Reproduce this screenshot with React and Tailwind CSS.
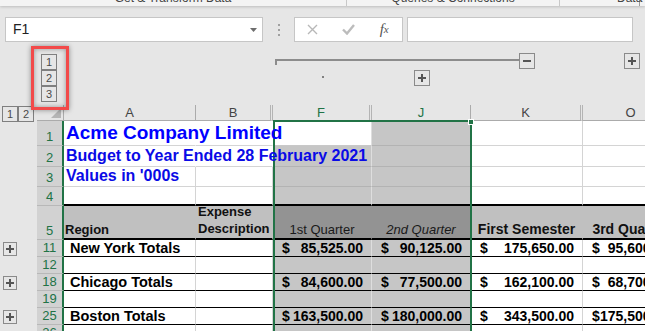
import React from "react";

const SANS = "[font-family:'Liberation_Sans',Arial,sans-serif]";

const totals = [
  { n: "11", label: "New York Totals", q1: "85,525.00", q2: "90,125.00", h1: "175,650.00", q3: "95,600.00" },
  { n: "12" },
  { n: "18", label: "Chicago Totals", q1: "84,600.00", q2: "77,500.00", h1: "162,100.00", q3: "68,700.00" },
  { n: "19" },
  { n: "25", label: "Boston Totals", q1: "163,500.00", q2: "180,000.00", h1: "343,500.00", q3: "175,500.00" },
];

function PlusIcon() {
  return (
    <svg width="8" height="8" viewBox="0 0 8 8" aria-hidden="true">
      <path d="M4 0v8M0 4h8" stroke="#555" strokeWidth="2" />
    </svg>
  );
}

function MinusIcon() {
  return (
    <svg width="8" height="8" viewBox="0 0 8 8" aria-hidden="true">
      <path d="M0 4h8" stroke="#555" strokeWidth="2" />
    </svg>
  );
}

function OutlineButton({ className = "", children }) {
  return (
    <div className={"flex items-center justify-center border border-[#8a8a8a] bg-[#e6e6e6] " + className}>
      {children}
    </div>
  );
}

function LevelBox({ children, className = "" }) {
  return (
    <div
      className={
        "flex h-[16px] w-[16px] items-center justify-center border border-[#7f7f7f] text-[11px] leading-none text-[#4a4a4a] " +
        className
      }
    >
      {children}
    </div>
  );
}

function Money({ value }) {
  return (
    <div className="flex w-full items-center justify-between pr-[8px] pl-[9px] text-[14px] leading-none font-bold whitespace-nowrap text-black">
      <span>$</span>
      <span>{value}</span>
    </div>
  );
}

const cell = "flex min-w-0 border-r border-b";
const plain = "bg-white border-[#d4d4d4]";
const sel = "bg-[#c6c6c6] border-r-[#dedede] border-b-[#b3b3b3]";
const rowHead =
  "flex items-end justify-center pb-[2px] border-b border-r-2 border-b-[#b8b8b8] border-r-[#217346] bg-[#d2d2d2] text-[13px] leading-none text-[#217346]";
const colHead = "flex items-center justify-center border-r border-b border-[#ababab] bg-[#e6e6e6] text-[13px] leading-none text-[#444]";

function TopBars() {
  return (
    <>
      <div className="relative z-10 flex h-[6px] overflow-hidden bg-[#f3f3f3] text-[12px] leading-[12px] text-[#444] shadow-[0_1px_3px_rgba(0,0,0,0.18)]">
        <div className="-mt-[8px] w-[347px] border-r border-[#c8c8c8] text-center">Get &amp; Transform Data</div>
        <div className="-mt-[8px] w-[213px] border-r border-[#c8c8c8] text-center">Queries &amp; Connections</div>
        <div className="-mt-[8px] w-[80px] border-r border-[#9a9a9a] pl-[57px] whitespace-nowrap">Data Tools</div>
      </div>

      <div className="mt-[11px] flex h-[25px] items-stretch">
        <div className="ml-[5px] flex w-[258px] items-center justify-between border border-[#c6c6c6] bg-white pr-[5px] pl-[7px]">
          <span className="text-[14px] text-[#222]">F1</span>
          <svg width="7" height="4" viewBox="0 0 7 4" aria-hidden="true">
            <path d="M0 0h7L3.5 4z" fill="#6d6d6d" />
          </svg>
        </div>
        <div className="ml-[15px] flex w-[2px] flex-col items-center justify-center gap-[3px]">
          <span className="h-[2px] w-[2px] bg-[#a0a0a0]" />
          <span className="h-[2px] w-[2px] bg-[#a0a0a0]" />
          <span className="h-[2px] w-[2px] bg-[#a0a0a0]" />
        </div>
        <div className="ml-[14px] flex w-[109px] border border-[#c6c6c6] bg-white">
          <div className="flex w-[36px] items-center justify-center">
            <svg width="11" height="11" viewBox="0 0 11 11" aria-hidden="true">
              <path d="M1 1l9 9M10 1l-9 9" stroke="#b8b8b8" strokeWidth="1.4" />
            </svg>
          </div>
          <div className="flex w-[36px] items-center justify-center">
            <svg width="13" height="11" viewBox="0 0 13 11" aria-hidden="true">
              <path d="M1 5.5l4 4L12 1" fill="none" stroke="#bcbcbc" strokeWidth="2.4" />
            </svg>
          </div>
          <div className="flex w-[36px] items-center justify-center [font-family:'Liberation_Serif',serif] text-[15px] text-[#555] italic">
            f<span className="text-[11px]">x</span>
          </div>
        </div>
        <div className="ml-[4px] w-[226px] border border-[#c6c6c6] bg-white" />
      </div>
    </>
  );
}

function OutlineBand() {
  return (
    <div className="relative z-20 h-[63px]">
      <div className="absolute top-[4px] left-[31px] h-[64px] w-[38px] border-[3px] border-[#f24a4a] shadow-[0_0_5px_rgba(0,0,0,0.4),inset_0_0_5px_rgba(0,0,0,0.35)]" />
      <div className="absolute top-[12px] left-[41px] flex flex-col">
        <LevelBox>1</LevelBox>
        <LevelBox>2</LevelBox>
        <LevelBox>3</LevelBox>
      </div>

      <div className="absolute top-[17px] left-[275px] h-[2px] w-[245px] bg-[#8c8c8c]" />
      <div className="absolute top-[17px] left-[275px] h-[6px] w-[2px] bg-[#8c8c8c]" />
      <OutlineButton className="absolute top-[11px] left-[519px] h-[16px] w-[16px]">
        <MinusIcon />
      </OutlineButton>
      <OutlineButton className="absolute top-[11px] left-[624px] h-[16px] w-[16px]">
        <PlusIcon />
      </OutlineButton>
      <div className="absolute top-[34px] left-[322px] h-[2px] w-[2px] bg-[#808080]" />
      <OutlineButton className="absolute top-[28px] left-[414px] h-[16px] w-[16px]">
        <PlusIcon />
      </OutlineButton>
    </div>
  );
}

function Sheet() {
  return (
    <div className="relative grid w-[679px] grid-cols-[37px_27px_132px_77px_99px_99px_112px_96px] grid-rows-[16px_25px_21px_20px_19px_34px_17px_17px_17px_17px_17px_17px]">
      {/* column headers */}
      <div className="flex items-start gap-0 pt-[1px] pl-[2px]">
        <LevelBox className="h-[15px]">1</LevelBox>
        <LevelBox className="h-[15px]">2</LevelBox>
      </div>
      <div className="flex items-end justify-end border-r border-b border-[#ababab] bg-[#e6e6e6] pr-[2px] pb-[2px]">
        <svg width="10" height="10" viewBox="0 0 10 10" aria-hidden="true">
          <path d="M10 0v10H0z" fill="#b5b5b5" />
        </svg>
      </div>
      <div className={colHead}>A</div>
      <div className={colHead + " border-double border-r-[3px] border-r-[#b4b4b4]"}>B</div>
      <div className={colHead + " border-double border-r-[3px] border-r-[#b4b4b4] bg-[#d3f0e0] text-[#217346]"}>F</div>
      <div className={colHead + " bg-[#d3f0e0] text-[#217346]"}>J</div>
      <div className={colHead + " border-double border-r-[3px] border-r-[#b4b4b4]"}>K</div>
      <div className={colHead}>O</div>

      {/* row 1 */}
      <div />
      <div className={rowHead}>1</div>
      <div className={cell + " " + plain + " relative z-[5] items-end border-r-white pb-[3px] pl-[2px]"}>
        <span className="text-[19px] leading-[18px] font-bold whitespace-nowrap text-[#0000ff]">Acme Company Limited</span>
      </div>
      <div className={cell + " " + plain + " border-r-white"} />
      <div className={cell + " bg-white border-r-[#dedede] border-b-[#c8c8c8]"} />
      <div className={cell + " " + sel} />
      <div className={cell + " " + plain} />
      <div className={cell + " " + plain} />

      {/* row 2 */}
      <div />
      <div className={rowHead}>2</div>
      <div className={cell + " " + plain + " relative z-[5] items-end border-r-white pb-[2px] pl-[2px]"}>
        <span className="text-[16px] leading-[16px] font-bold whitespace-nowrap text-[#0a0ae6]">
          Budget to Year Ended 28 February 2021
        </span>
      </div>
      <div className={cell + " " + plain + " border-r-white"} />
      <div className={cell + " " + sel} />
      <div className={cell + " " + sel} />
      <div className={cell + " " + plain} />
      <div className={cell + " " + plain} />

      {/* row 3 */}
      <div />
      <div className={rowHead}>3</div>
      <div className={cell + " " + plain + " relative z-[5] items-end pb-[2px] pl-[2px]"}>
        <span className="text-[16px] leading-[16px] font-bold whitespace-nowrap text-[#0a0ae6]">Values in &apos;000s</span>
      </div>
      <div className={cell + " " + plain} />
      <div className={cell + " " + sel} />
      <div className={cell + " " + sel} />
      <div className={cell + " " + plain} />
      <div className={cell + " " + plain} />

      {/* row 4 */}
      <div />
      <div className={rowHead}>4</div>
      <div className={cell + " " + plain + " border-b-2 border-b-black"} />
      <div className={cell + " " + plain + " border-b-2 border-b-black"} />
      <div className={cell + " " + sel + " border-b-2 border-b-black"} />
      <div className={cell + " " + sel + " border-b-2 border-b-black"} />
      <div className={cell + " " + plain + " border-b-2 border-b-black"} />
      <div className={cell + " " + plain + " border-b-2 border-b-black"} />

      {/* row 5 */}
      <div />
      <div className={rowHead}>5</div>
      <div className={cell + " items-end border-b-2 border-r-[#c0c0c0] border-b-black bg-[#c0c0c0] pb-[1px] pl-[1px]"}>
        <span className="text-[13px] leading-[15px] font-bold text-[#111]">Region</span>
      </div>
      <div className={cell + " items-end border-b-2 border-r-[#c0c0c0] border-b-black bg-[#c0c0c0] pb-[1px] pl-[2px]"}>
        <span className="text-[13px] leading-[17px] font-bold text-[#111]">
          Expense
          <br />
          Description
        </span>
      </div>
      <div className={cell + " items-end justify-center border-b-2 border-r-[#939393] border-b-black bg-[#939393] pb-[1px]"}>
        <span className="text-[13px] leading-[15px] text-[#1a1a1a]">1st Quarter</span>
      </div>
      <div className={cell + " items-end justify-center border-b-2 border-r-[#939393] border-b-black bg-[#939393] pb-[1px]"}>
        <span className="text-[13px] leading-[15px] text-[#1a1a1a] italic">2nd Quarter</span>
      </div>
      <div className={cell + " items-end justify-center border-b-2 border-r-[#c0c0c0] border-b-black bg-[#c0c0c0] pb-[1px]"}>
        <span className="text-[14px] leading-[15px] font-bold whitespace-nowrap text-[#111]">First Semester</span>
      </div>
      <div className={cell + " items-end justify-center border-b-2 border-r-[#c0c0c0] border-b-black bg-[#c0c0c0] pb-[1px]"}>
        <span className="text-[14px] leading-[15px] font-bold whitespace-nowrap text-[#111]">3rd Quarter</span>
      </div>

      {/* total rows */}
      {totals.map((r) => (
        <React.Fragment key={r.n}>
          <div className="flex items-center pl-[3px]">
            {r.label ? (
              <OutlineButton className="h-[14px] w-[14px]">
                <PlusIcon />
              </OutlineButton>
            ) : null}
          </div>
          <div className={rowHead}>{r.n}</div>
          <div className={cell + " " + plain + " items-center border-b-black pl-[6px]"}>
            {r.label ? (
              <span className="text-[14.5px] leading-none font-bold whitespace-nowrap text-black">{r.label}</span>
            ) : null}
          </div>
          <div className={cell + " " + plain + " border-b-black"} />
          <div className={cell + " " + sel + " items-center border-b-black"}>{r.q1 ? <Money value={r.q1} /> : null}</div>
          <div className={cell + " " + sel + " items-center border-b-black"}>{r.q2 ? <Money value={r.q2} /> : null}</div>
          <div className={cell + " " + plain + " items-center border-b-black"}>{r.h1 ? <Money value={r.h1} /> : null}</div>
          <div className={cell + " " + plain + " items-center border-b-black"}>{r.q3 ? <Money value={r.q3} /> : null}</div>
        </React.Fragment>
      ))}

      {/* row 26 */}
      <div />
      <div className={rowHead}>26</div>
      <div className={cell + " " + plain} />
      <div className={cell + " " + plain} />
      <div className={cell + " " + sel} />
      <div className={cell + " " + sel} />
      <div className={cell + " " + plain} />
      <div className={cell + " " + plain} />

      {/* selected columns F:J */}
      <div className="pointer-events-none absolute top-[15px] bottom-0 left-[273px] w-[199px] border-2 border-b-0 border-[#217346]">
        <div className="absolute -top-[3px] -right-[4px] h-[6px] w-[6px] border border-white bg-[#217346]" />
      </div>
    </div>
  );
}

export default function App() {
  return (
    <div className={"h-[331px] w-[645px] overflow-hidden bg-[#e6e6e6] " + SANS}>
      <TopBars />
      <OutlineBand />
      <Sheet />
    </div>
  );
}
